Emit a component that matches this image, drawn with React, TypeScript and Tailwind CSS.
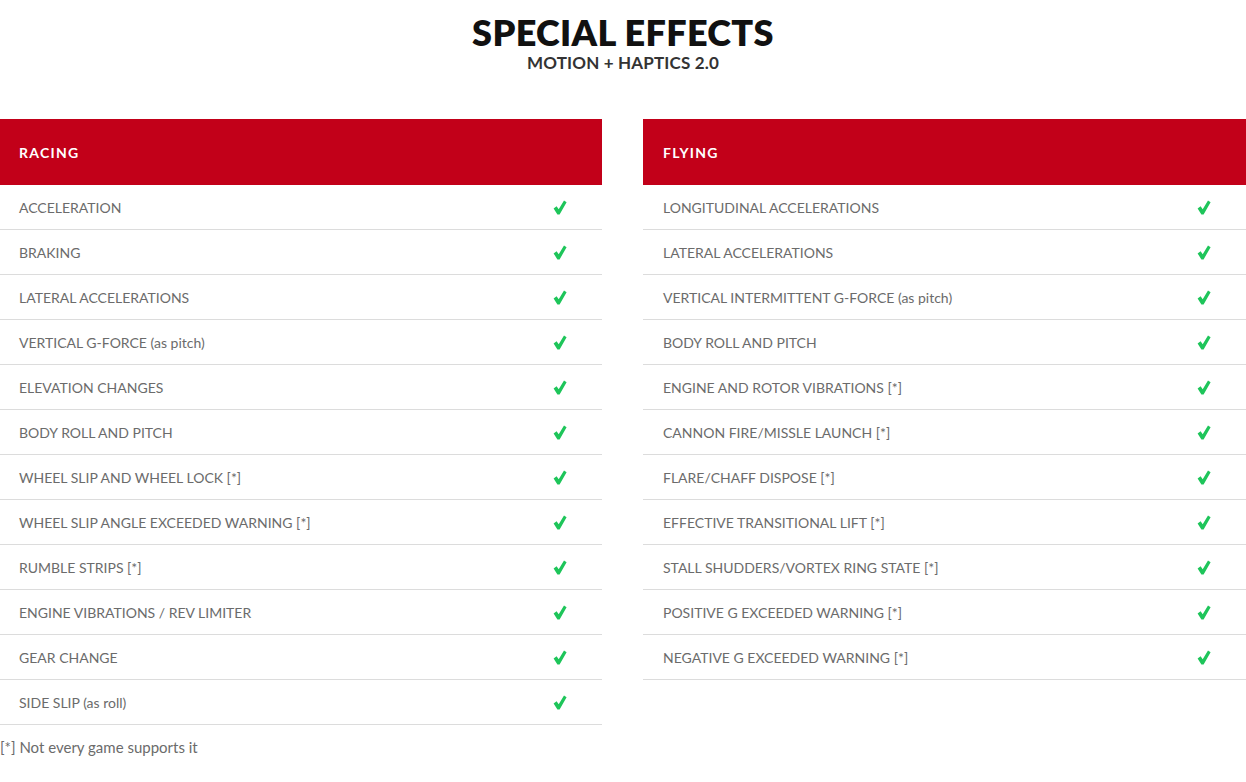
import React from "react";

const racing = [
  "ACCELERATION",
  "BRAKING",
  "LATERAL ACCELERATIONS",
  "VERTICAL G-FORCE (as pitch)",
  "ELEVATION CHANGES",
  "BODY ROLL AND PITCH",
  "WHEEL SLIP AND WHEEL LOCK [*]",
  "WHEEL SLIP ANGLE EXCEEDED WARNING [*]",
  "RUMBLE STRIPS [*]",
  "ENGINE VIBRATIONS / REV LIMITER",
  "GEAR CHANGE",
  "SIDE SLIP (as roll)",
];

const flying = [
  "LONGITUDINAL ACCELERATIONS",
  "LATERAL ACCELERATIONS",
  "VERTICAL INTERMITTENT G-FORCE (as pitch)",
  "BODY ROLL AND PITCH",
  "ENGINE AND ROTOR VIBRATIONS [*]",
  "CANNON FIRE/MISSLE LAUNCH [*]",
  "FLARE/CHAFF DISPOSE [*]",
  "EFFECTIVE TRANSITIONAL LIFT [*]",
  "STALL SHUDDERS/VORTEX RING STATE [*]",
  "POSITIVE G EXCEEDED WARNING [*]",
  "NEGATIVE G EXCEEDED WARNING [*]",
];

// heavy check mark, thicker at the bottom like the reference glyph
const Check = () => (
  <svg width="14" height="15" viewBox="0 0 14 15" className="block">
    <path
      d="M0.6 8.4 L3.6 6.2 L5.7 9.2 L11 0.6 L13.6 2.2 L6.6 14.4 L4.4 14.4 Z"
      fill="#1ec55a"
    />
  </svg>
);

const EffectTable = ({
  title,
  items,
  inset,
}: {
  title: string;
  items: string[];
  inset: string;
}) => (
  <div>
    <div className={`flex h-[66px] items-center bg-[#c20019] ${inset}`}>
      <h2 className="text-[14px] font-bold tracking-[0.09em] text-white">{title}</h2>
    </div>
    {items.map((item) => (
      <div
        key={item}
        className={`flex h-[45px] items-center justify-between border-b border-[#dcdcdc] pr-[35px] ${inset}`}
      >
        <span className="text-[14px] text-[#6b6b6b]">{item}</span>
        <Check />
      </div>
    ))}
  </div>
);

export default function App() {
  return (
    <div
      className="min-h-screen bg-white"
      style={{ fontFamily: "Lato, 'Open Sans', sans-serif" }}
    >
      <header className="pt-[13px] text-center">
        <h1 className="text-[36px] font-extrabold leading-[39px] tracking-[0.01em] text-[#111]">
          SPECIAL EFFECTS
        </h1>
        <p className="text-[17px] font-bold leading-[22px] tracking-[0.01em] text-[#333]">
          MOTION + HAPTICS 2.0
        </p>
      </header>

      <div className="mt-[45px] grid grid-cols-[602px_603px] gap-x-[41px]">
        <EffectTable title="RACING" items={racing} inset="pl-[19px]" />
        <EffectTable title="FLYING" items={flying} inset="pl-[20px]" />
      </div>

      <p className="mt-[11px] text-[15px] text-[#6b6b6b]">[*] Not every game supports it</p>
    </div>
  );
}
